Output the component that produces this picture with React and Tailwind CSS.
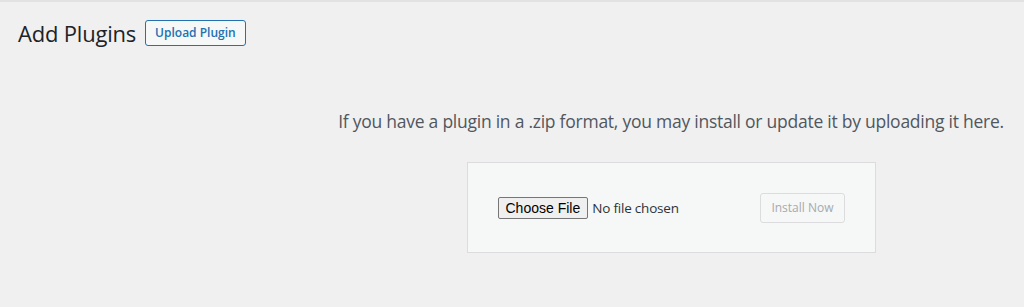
import React from 'react';

const App = () => {
    return (
        <div className="w-[1024px] h-[307px] bg-[#f0f0f1] border-t-2 border-[#e2e2e3] overflow-hidden" style={{ fontFamily: '"Open Sans", "Noto Sans", sans-serif' }}>
            <div className="flex items-center gap-[9px] pl-[18px] pt-[16px]">
                <h1 className="text-[22px] leading-[30px] text-[#1d2327] font-normal tracking-[-0.2px]">Add Plugins</h1>
                <button className="h-[26px] px-[9px] border border-[#2271b1] rounded-[3px] bg-[#f6f7f7] text-[#2271b1] text-[12px] font-semibold leading-none">
                    Upload Plugin
                </button>
            </div>

            <div className="pl-[318px] flex flex-col items-center">
                <p className="mt-[62px] text-[17.5px] leading-[22px] text-[#50575e] tracking-[-0.25px]">
                    If you have a plugin in a .zip format, you may install or update it by uploading it here.
                </p>

                <div className="mt-[30px] w-[409px] h-[91px] bg-[#f6f7f7] border border-[#dcdcde] flex items-center justify-between px-[30px]">
                    <div className="flex items-center gap-[4px] mt-[1px]">
                        <button
                            className="h-[22px] px-[7px] border border-[#767676] rounded-[2px] bg-[#efefef] text-[14px] leading-none text-black"
                            style={{ fontFamily: '"Liberation Sans", Arial, sans-serif' }}
                        >
                            Choose File
                        </button>
                        <span className="text-[13.5px] tracking-[-0.2px] text-[#2c3338]">No file chosen</span>
                    </div>
                    <button
                        disabled
                        className="h-[30px] px-[10px] border border-[#dcdcde] rounded-[3px] bg-[#f6f7f7] text-[#a7aaad] text-[12px] leading-none"
                    >
                        Install Now
                    </button>
                </div>
            </div>
        </div>
    );
};

export default App;
